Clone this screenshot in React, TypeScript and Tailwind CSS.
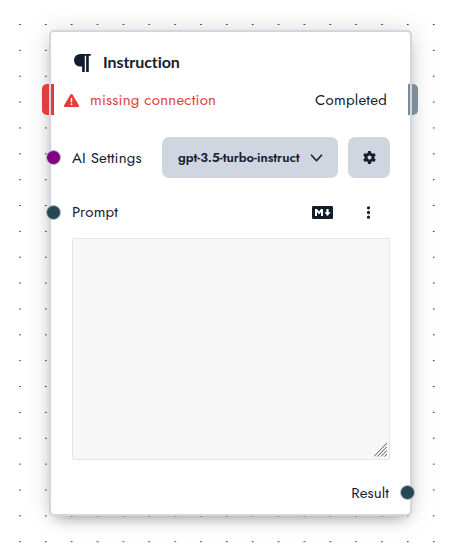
import React from "react";
import { FaEllipsisVertical, FaGear, FaTriangleExclamation } from "react-icons/fa6";

function Grid() {
  return (
    <svg className="absolute inset-0 h-full w-full" aria-hidden="true">
      <defs>
        <pattern id="dots" x="19.1" y="24" width="25.86" height="25.86" patternUnits="userSpaceOnUse">
          <rect width="1.6" height="1" fill="#303039" />
        </pattern>
      </defs>
      <rect y="20" width="100%" height="100%" fill="url(#dots)" />
    </svg>
  );
}

function Pilcrow() {
  return (
    <svg className="h-[18px] w-[17px] shrink-0" viewBox="0 0 17 18" fill="#111c2d">
      <path d="M6.3 0H16.2Q17 0 17 .7V1.1Q17 1.8 16.2 1.8H14.8V17.4Q14.8 18 14.2 18H12.7Q12.1 18 12.1 17.4V1.8H10.8V17.4Q10.8 18 10.2 18H8.7Q8.1 18 8.1 17.4V12.6H6.3A6.3 6.3 0 0 1 6.3 0Z" />
    </svg>
  );
}

function MarkdownIcon() {
  return (
    <svg className="h-[13px] w-[21px]" viewBox="0 0 21 13">
      <rect width="21" height="13" rx="1.3" fill="#111c2d" />
      <path d="M3 10V3H5L7 5.6L9 3H11V10H9V6L7 8.5L5 6V10Z" fill="#fff" />
      <path d="M14.4 3H16.6V6.2H18.6L15.5 10L12.4 6.2H14.4Z" fill="#fff" />
    </svg>
  );
}

function Port({ className }: { className: string }) {
  return <span className={`absolute rounded-full border border-[#b8c1c5] ${className}`} />;
}

const label = "inline-block whitespace-nowrap text-[15px] leading-5";

export default function App() {
  return (
    <main className="relative h-[546px] w-[449px] overflow-hidden bg-white pl-[49px] pt-[30px] font-['Jost','Lato',sans-serif] text-[#152033]">
      <Grid />
      <section className="relative flex h-[485.5px] w-[363px] flex-col rounded-[5px] border-2 border-[#d0d7e2] bg-white px-[21px] pt-[20px] shadow-[0_7px_14px_-7px_rgba(0,0,0,0.4),0_0_24px_rgba(0,0,0,0.15)]">
        <span className="absolute left-[-9px] top-[52px] h-[31px] w-[12px] rounded-l-[5px] bg-[#e23d3d]" />
        <span className="absolute right-[-8px] top-[52px] h-[31px] w-[10px] rounded-r-[5px] bg-[#7d8c96]" />
        <span className="absolute left-[-2px] top-[51px] h-[33px] w-[2px] bg-[#d0d7e2]" />
        <span className="absolute right-[-2px] top-[51px] h-[33px] w-[2px] bg-[#d0d7e2]" />

        <header className="flex h-5 items-center gap-[12px] pl-[2px] pt-[2px]">
          <Pilcrow />
          <h1 className="-mt-[2px] font-['Lato',sans-serif] text-base font-bold leading-5 tracking-[-0.08px]">Instruction</h1>
        </header>

        <div className="mt-[18px] flex h-5 items-center justify-between pr-[2px] text-[15px]">
          <div className="-ml-[8px] flex items-center gap-[11px] text-[#e23d3d]">
            <FaTriangleExclamation className="h-[15px] w-[15px]" />
            <span className={`${label} tracking-[0.23px]`}>missing connection</span>
          </div>
          <span className={`${label} tracking-[0.25px]`}>Completed</span>
        </div>

        <div className="-mr-px mt-[27px] flex h-[41px] items-center justify-between">
          <span className={`${label} tracking-[0.2px]`}>AI Settings</span>
          <div className="flex gap-[10px]">
            <button className="flex h-[41px] w-[176px] items-center justify-between rounded-[7px] bg-[#d0d6e0] pl-4 pr-[15px] text-[13px] font-semibold">
              <span className="whitespace-nowrap tracking-[-0.02px]">gpt-3.5-turbo-instruct</span>
              <svg className="h-[8px] w-[13px]" viewBox="0 0 13 8" fill="none" stroke="#152033" strokeWidth="1.6" strokeLinecap="round" strokeLinejoin="round">
                <path d="M1.5 1.2L6.5 6.7L11.5 1.2" />
              </svg>
            </button>
            <button className="flex h-[41px] w-[42px] items-center justify-center rounded-[7px] bg-[#d0d6e0]">
              <FaGear className="h-[13px] w-[13px]" />
            </button>
          </div>
        </div>

        <div className="mt-6 flex h-5 items-center justify-between">
          <span className={`${label} tracking-[0.2px]`}>Prompt</span>
          <div className="flex items-center gap-[28px] pr-[13px]">
            <MarkdownIcon />
            <FaEllipsisVertical className="h-[15px] w-[15px]" />
          </div>
        </div>

        <div className="mt-4 flex h-[222px] w-[318px] items-end justify-end rounded-[2px] border border-[#e5e5e5] bg-[#f7f7f7] p-[2px]">
          <svg className="h-[14px] w-[13px]" viewBox="0 0 13 14" stroke="#555" strokeWidth="1" fill="none">
            <path d="M0 13.5L13 0M3.5 13.5L13 3.5M7 13.5L13 7.3M10.5 13.5L13 11" />
          </svg>
        </div>
        <span className={`${label} mt-[23px] self-end tracking-[0.1px]`}>Result</span>

        <Port className="left-[-5px] top-[118px] h-[15px] w-[15px] bg-[#800080]" />
        <Port className="left-[-5px] top-[172.5px] h-[15px] w-[15px] bg-[#254653]" />
        <Port className="right-[-5px] top-[453px] h-[15px] w-[15px] bg-[#254653]" />
      </section>
    </main>
  );
}
